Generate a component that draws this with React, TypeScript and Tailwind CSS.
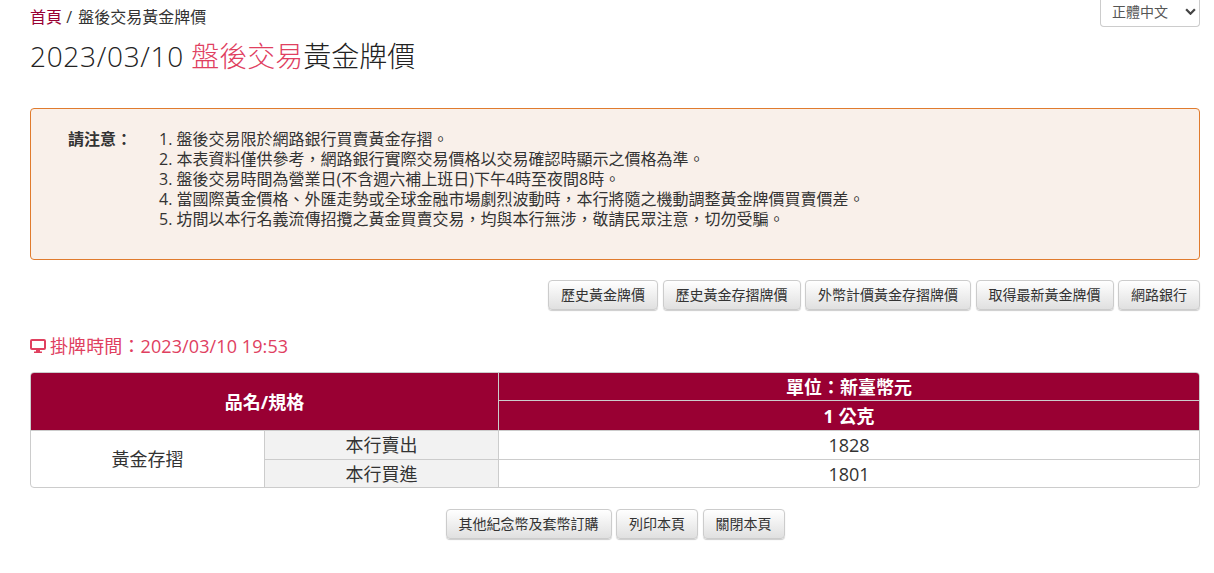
const font = `"Open Sans", "Noto Sans CJK TC", sans-serif`;

const notes = [
  "盤後交易限於網路銀行買賣黃金存摺。",
  "本表資料僅供參考，網路銀行實際交易價格以交易確認時顯示之價格為準。",
  "盤後交易時間為營業日(不含週六補上班日)下午4時至夜間8時。",
  "當國際黃金價格、外匯走勢或全球金融市場劇烈波動時，本行將隨之機動調整黃金牌價買賣價差。",
  "坊間以本行名義流傳招攬之黃金買賣交易，均與本行無涉，敬請民眾注意，切勿受騙。",
];

const Btn = ({ children }: { children: React.ReactNode }) => (
  <button className="h-[30px] rounded-[4px] border border-[#ccc] bg-gradient-to-b from-white to-[#e0e0e0] px-3 text-[14px] leading-none text-[#333] shadow-[0_1px_1px_rgba(0,0,0,0.2)]">
    {children}
  </button>
);

export default function App() {
  return (
    <div className="relative min-h-[573px] bg-white pr-[14px] pl-[30px] text-[#333]" style={{ fontFamily: font }}>
      <div className="absolute top-0 right-[14px] flex h-[27px] w-[100px] items-center justify-between rounded-b-[4px] border border-t-0 border-[#ccc] pr-[3px] pb-[4px] pl-[11px] text-[14px] text-[#555]">
        正體中文
        <svg viewBox="0 0 12 8" className="h-[7px] w-[11px] text-[#444]" fill="none" stroke="currentColor" strokeWidth="2.6">
          <path d="M1 1.5l5 5 5-5" />
        </svg>
      </div>

      <div className="pt-[7px] text-[16px] leading-[20px]">
        <span className="text-[#990033]">首頁</span> / <span className="ml-[2px]">盤後交易黃金牌價</span>
      </div>
      <h1 className="mt-[11px] text-[28px] leading-[36px] font-light text-[#222]">
        <span className="tracking-[0.7px]">2023/03/10</span> <span className="text-[#e0405f]">盤後交易</span>黃金牌價
      </h1>

      <div className="mt-[34px] flex h-[152px] rounded-[4px] border border-[#e07b2e] bg-[#f9f0ea] pt-[20px] pl-[37px] text-[16px] leading-[20px]">
        <div className="w-[91px] font-bold">請注意：</div>
        <ol className="list-none">
          {notes.map((n, i) => (
            <li key={i}>
              {i + 1}. {n}
            </li>
          ))}
        </ol>
      </div>

      <div className="mt-[20px] flex justify-end gap-[4.5px]">
        <Btn>歷史黃金牌價</Btn>
        <Btn>歷史黃金存摺牌價</Btn>
        <Btn>外幣計價黃金存摺牌價</Btn>
        <Btn>取得最新黃金牌價</Btn>
        <Btn>網路銀行</Btn>
      </div>

      <div className="mt-[24px] flex items-center gap-[4px] text-[18px] leading-[24px] text-[#e0405f]">
        <svg viewBox="0 0 16 14" className="h-[14px] w-[16px]" fill="currentColor">
          <path d="M2 0h12a2 2 0 0 1 2 2v7a2 2 0 0 1-2 2H2a2 2 0 0 1-2-2V2a2 2 0 0 1 2-2zm0 2v7h12V2H2z" fillRule="evenodd" />
          <path d="M6 11h4v1.5h2V14H4v-1.5h2z" />
        </svg>
        <span className="tracking-[0.1px]">掛牌時間：2023/03/10 19:53</span>
      </div>

      <div className="mt-[14px] grid grid-cols-[234px_234px_1fr] grid-rows-[28px_29px_29px_28px] overflow-hidden rounded-[4px] border border-[#ccc] text-center text-[18px] leading-none">
        <div className="col-span-2 row-span-2 flex items-center justify-center border-r border-[#ccc] bg-[#990033] font-bold text-white">
          品名/規格
        </div>
        <div className="flex items-center justify-center border-b border-[#ccc] bg-[#990033] font-bold text-white">
          單位：新臺幣元
        </div>
        <div className="flex items-center justify-center bg-[#990033] font-bold text-white">1 公克</div>
        <div className="row-span-2 flex items-center justify-center border-t border-r border-[#ccc]">黃金存摺</div>
        <div className="flex items-center justify-center border-t border-r border-[#ccc] bg-[#f2f2f2]">本行賣出</div>
        <div className="flex items-center justify-center border-t border-[#ccc]">1828</div>
        <div className="flex items-center justify-center border-t border-r border-[#ccc] bg-[#f2f2f2]">本行買進</div>
        <div className="flex items-center justify-center border-t border-[#ccc]">1801</div>
      </div>

      <div className="mt-[21px] flex justify-center gap-[4.5px]">
        <Btn>其他紀念幣及套幣訂購</Btn>
        <Btn>列印本頁</Btn>
        <Btn>關閉本頁</Btn>
      </div>
    </div>
  );
}
